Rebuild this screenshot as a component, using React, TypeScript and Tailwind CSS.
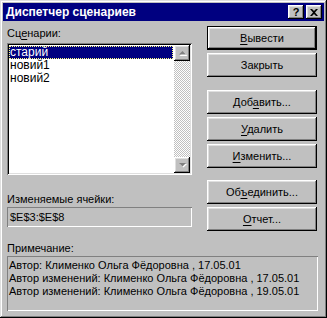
import React from "react";

const raised =
  "shadow-[inset_-1px_-1px_#000,inset_1px_1px_#fff,inset_-2px_-2px_#808080,inset_2px_2px_#dfdfdf]";
const sunken =
  "shadow-[inset_1px_1px_#808080,inset_-1px_-1px_#fff,inset_2px_2px_#000,inset_-2px_-2px_#dfdfdf]";
const sunkenFlat = "shadow-[inset_1px_1px_#808080,inset_-1px_-1px_#fff]";

function Btn({
    pre = "",
    u = "",
    post = "",
    isDefault = false,
}: {
    pre?: string;
    u?: string;
    post?: string;
    isDefault?: boolean;
}) {
    return (
        <div
            className={`h-[24px] w-[110px] flex items-center justify-center bg-[#c0c0c0] text-black ${
                isDefault
                    ? "shadow-[inset_0_0_0_1px_#000,inset_-2px_-2px_#000,inset_2px_2px_#fff,inset_-3px_-3px_#808080,inset_3px_3px_#dfdfdf]"
                    : raised
            }`}
        >
            <span>
                {pre}
                {u && <span className="underline underline-offset-[2px]">{u}</span>}
                {post}
            </span>
        </div>
    );
}

function ArrowBtn({ up }: { up: boolean }) {
    return (
        <div className={`h-[16px] w-[16px] bg-[#c0c0c0] flex items-center justify-center ${raised}`}>
            <svg width="7" height="4" viewBox="0 0 7 4" className="overflow-visible">
                {up ? (
                    <>
                        <polygon points="4.5,1 8.5,5 0.5,5" fill="#fff" />
                        <polygon points="3.5,0 7,3.5 0,3.5" fill="#808080" />
                    </>
                ) : (
                    <>
                        <polygon points="1,1 8,1 4.5,4.5" fill="#fff" />
                        <polygon points="0,0 7,0 3.5,3.5" fill="#808080" />
                    </>
                )}
            </svg>
        </div>
    );
}

export default function App() {
    const items = ["старий", "новий1", "новий2"];
    const notes = [
        "Автор: Клименко Ольга Фёдоровна , 17.05.01",
        "Автор изменений: Клименко Ольга Фёдоровна , 17.05.01",
        "Автор изменений: Клименко Ольга Фёдоровна , 19.05.01",
    ];

    return (
        <div
            className="w-[327px] h-[318px] bg-[#c0c0c0] p-[3px] text-[11px] leading-[13px] text-black shadow-[inset_-1px_-1px_#000,inset_1px_1px_#dfdfdf,inset_-2px_-2px_#808080,inset_2px_2px_#fff]"
            style={{ fontFamily: '"Liberation Sans", Arial, sans-serif' }}
        >
            {/* title bar */}
            <div className="h-[18px] bg-[#000080] flex items-center pl-[3px] pr-[2px]">
                <span className="text-white font-bold text-[12px] flex-1">Диспетчер сценариев</span>
                <div className={`h-[14px] w-[16px] flex items-center justify-center bg-[#c0c0c0] font-bold text-[11px] ${raised}`}>
                    ?
                </div>
                <div className={`ml-[2px] h-[14px] w-[16px] flex items-center justify-center bg-[#c0c0c0] ${raised}`}>
                    <svg width="8" height="7" viewBox="0 0 8 7">
                        <path d="M0 0h2l2 2 2-2h2L5 3.5 8 7H6L4 5 2 7H0l3-3.5z" fill="#000" />
                    </svg>
                </div>
            </div>

            <div className="flex pl-[4px] pt-[5px] gap-[15px]">
                {/* left column */}
                <div className="w-[185px] flex flex-col">
                    <div className="h-[13px] mt-[1px]">
                        Сц<span className="underline underline-offset-[2px]">е</span>нарии:
                    </div>
                    <div className={`mt-[3px] h-[132px] bg-white p-[2px] flex ${sunken}`}>
                        <div className="flex-1 pt-[1px] text-[12px]">
                            {items.map((it, i) => (
                                <div
                                    key={it}
                                    className={`h-[13px] leading-[13px] pl-[1px] mr-[1px] ${
                                        i === 0
                                            ? "bg-[#000080] text-white outline-1 outline-dotted outline-[#ffff80] -outline-offset-1"
                                            : ""
                                    }`}
                                >
                                    {it}
                                </div>
                            ))}
                        </div>
                        <div className="w-[16px] flex flex-col bg-[repeating-conic-gradient(#c0c0c0_0_25%,#fff_0_50%)] bg-[length:2px_2px]">
                            <ArrowBtn up />
                            <div className="flex-1" />
                            <ArrowBtn up={false} />
                        </div>
                    </div>

                    <div className="mt-[18px] h-[13px]">Изменяемые ячейки:</div>
                    <div className={`mt-[1px] h-[20px] flex items-center pl-[3px] ${sunkenFlat}`}>
                        $E$3:$E$8
                    </div>
                </div>

                {/* right column */}
                <div className="flex flex-col gap-[3px]">
                    <Btn u="В" post="ывести" isDefault />
                    <Btn post="Закрыть" />
                    <div className="h-[7px]" />
                    <Btn pre="Доб" u="а" post="вить..." />
                    <Btn u="У" post="далить" />
                    <Btn u="И" post="зменить..." />
                    <div className="h-[6px]" />
                    <Btn pre="Об" u="ъ" post="единить..." />
                    <Btn u="О" post="тчет..." />
                </div>
            </div>

            <div className="pl-[4px] pr-[6px] mt-[11px]">
                <div className="h-[13px]">Примечание:</div>
                <div className={`mt-[1px] h-[55px] px-[2px] pt-[3px] ${sunkenFlat}`}>
                    {notes.map((n, i) => (
                        <div key={i} className="h-[13px] whitespace-nowrap">
                            {n}
                        </div>
                    ))}
                </div>
            </div>
        </div>
    );
}
